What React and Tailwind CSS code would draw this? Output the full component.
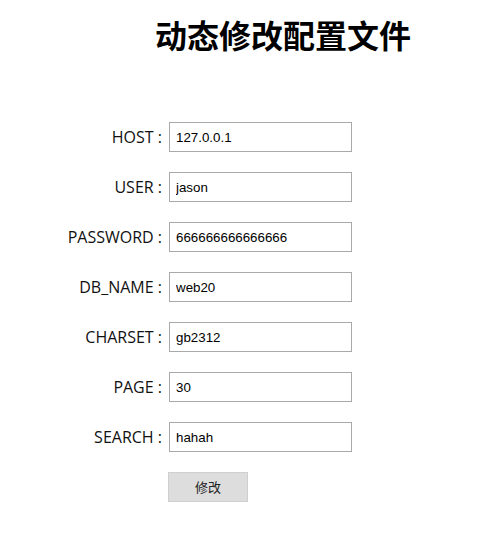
import React, { useState } from 'react';

const fields = [
  ['HOST', 'host', '127.0.0.1'],
  ['USER', 'user', 'jason'],
  ['PASSWORD', 'password', '666666666666666'],
  ['DB_NAME', 'db_name', 'web20'],
  ['CHARSET', 'charset', 'gb2312'],
  ['PAGE', 'page', '30'],
  ['SEARCH', 'search', 'hahah'],
];

export default function App() {
  const [values, setValues] = useState(
    Object.fromEntries(fields.map(([, key, val]) => [key, val]))
  );

  return (
    <div className="min-h-[536px] bg-white text-black [font-family:'Open_Sans','Noto_Sans_CJK_SC',sans-serif]">
      <h1 className="pl-[155px] pt-[12px] text-[32px] font-bold leading-[44px] [font-family:'Noto_Sans_CJK_SC',sans-serif]">
        动态修改配置文件
      </h1>
      <form className="mt-[66px] flex flex-col gap-[20px]" onSubmit={(e) => e.preventDefault()}>
        {fields.map(([label, key]) => (
          <div key={key} className="flex h-[30px] items-center">
            <label className="w-[164px] pr-[2px] text-right text-[16px] leading-[30px] text-[#111]">
              {label} :
            </label>
            <input
              value={values[key]}
              onChange={(e) => setValues({ ...values, [key]: e.target.value })}
              className="ml-[5px] h-[30px] w-[183px] border border-[#a9a9a9] bg-white px-[6px] text-[13.33px] text-black outline-none [font-family:'Liberation_Sans',Arial,sans-serif]"
            />
          </div>
        ))}
        <div className="pl-[168px]">
          <button
            type="submit"
            className="h-[30px] w-[80px] border border-[#cfcfcf] bg-[#dddddd] text-[13px] text-[#222] [font-family:'Noto_Sans_CJK_SC',sans-serif]"
          >
            修改
          </button>
        </div>
      </form>
    </div>
  );
}
